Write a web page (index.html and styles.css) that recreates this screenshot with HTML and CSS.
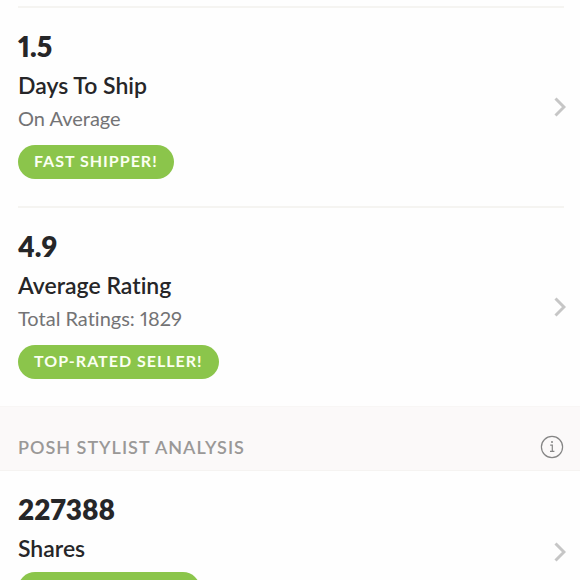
FILE: index.html
```html
<!DOCTYPE html>
<html lang="en">
<head>
    <meta charset="UTF-8">
    <meta name="viewport" content="width=device-width, initial-scale=1.0">
    <title>My Stats</title>
    <link rel="stylesheet" href="styles.css">
</head>
<body>
    <!-- Seller Stats -->
    <section class="stats">
        <a class="stat" href="#shipping">
            <div class="stat-info">
                <div class="value">1.5</div>
                <div class="label">Days To Ship</div>
                <div class="note">On Average</div>
                <span class="badge">FAST SHIPPER!</span>
            </div>
            <svg class="chevron" viewBox="0 0 12 20"><path d="M1.5 1.5 L10 10 L1.5 18.5"/></svg>
        </a>
        <a class="stat" href="#ratings">
            <div class="stat-info">
                <div class="value">4.9</div>
                <div class="label">Average Rating</div>
                <div class="note">Total Ratings: 1829</div>
                <span class="badge">TOP-RATED SELLER!</span>
            </div>
            <svg class="chevron" viewBox="0 0 12 20"><path d="M1.5 1.5 L10 10 L1.5 18.5"/></svg>
        </a>
    </section>

    <!-- Stylist Analysis -->
    <header class="section-header">
        <h2>POSH STYLIST ANALYSIS</h2>
        <button class="info-btn" type="button" aria-label="Info">
            <svg viewBox="0 0 24 24">
                <circle class="ring" cx="12" cy="12" r="10.6"/>
                <circle class="dot" cx="12" cy="7" r="1"/>
                <path class="stem" d="M10.2 10.2 H12.3 V16.4 M10 16.4 H14.4"/>
            </svg>
        </button>
    </header>
    <section class="analysis">
        <a class="stat" href="#shares">
            <div class="stat-info">
                <div class="value">227388</div>
                <div class="label">Shares</div>
                <span class="badge">AMAZING SHARE!</span>
            </div>
            <svg class="chevron" viewBox="0 0 12 20"><path d="M1.5 1.5 L10 10 L1.5 18.5"/></svg>
        </a>
    </section>
</body>
</html>
```
FILE: styles.css
```css
/* Styling for the seller stats list */
body {
    font-family: Lato, 'Open Sans', sans-serif;
    font-variant-ligatures: none;
    font-variant-numeric: proportional-nums;
    margin: 0;
    background: #fefefe;
    color: #262628;
}

.stats {
    padding-top: 6px;
}

.stat {
    display: flex;
    align-items: center;
    justify-content: space-between;
    margin: 0 14px 0 18px;
    color: inherit;
    text-decoration: none;
}

.stats .stat {
    margin-right: 16px;
    border-top: 2px solid #f5f4f1;
}

.stat-info {
    padding: 18px 0 27px;
}

.stats .chevron {
    margin-right: -2px;
}

.value {
    font-size: 28px;
    font-weight: 800;
    line-height: 40px;
}

.label {
    padding-bottom: 2px;
    font-size: 23px;
    font-weight: 600;
    line-height: 38px;
}

.note {
    padding-bottom: 12px;
    font-size: 20px;
    line-height: 24px;
    color: #737375;
}

.badge {
    display: block;
    width: fit-content;
    margin-top: 3px;
    padding: 0 16px 2px;
    border-radius: 17px;
    background: #8bc54b;
    color: #fbfff2;
    font-size: 16px;
    font-weight: 700;
    letter-spacing: 1px;
    line-height: 32px;
}

.chevron {
    width: 12px;
    height: 20px;
    fill: none;
    stroke: #c6c6c6;
    stroke-width: 3;
}

.section-header {
    display: flex;
    align-items: center;
    justify-content: space-between;
    padding: 17px 16px 0 18px;
    border-top: 1px solid #f8f6f5;
    border-bottom: 1px solid #f5f3f1;
    background: #fbf9f9;
}

.section-header h2 {
    margin: 0;
    font-size: 18px;
    font-weight: 600;
    letter-spacing: 1px;
    line-height: 46px;
    color: #9a9897;
}

.info-btn {
    width: 24px;
    height: 24px;
    padding: 0;
    border: none;
    background: none;
    cursor: pointer;
}

.info-btn svg {
    display: block;
}

.ring,
.stem {
    fill: none;
    stroke: #858585;
    stroke-width: 1.2;
}

.dot {
    fill: #858585;
}
```
